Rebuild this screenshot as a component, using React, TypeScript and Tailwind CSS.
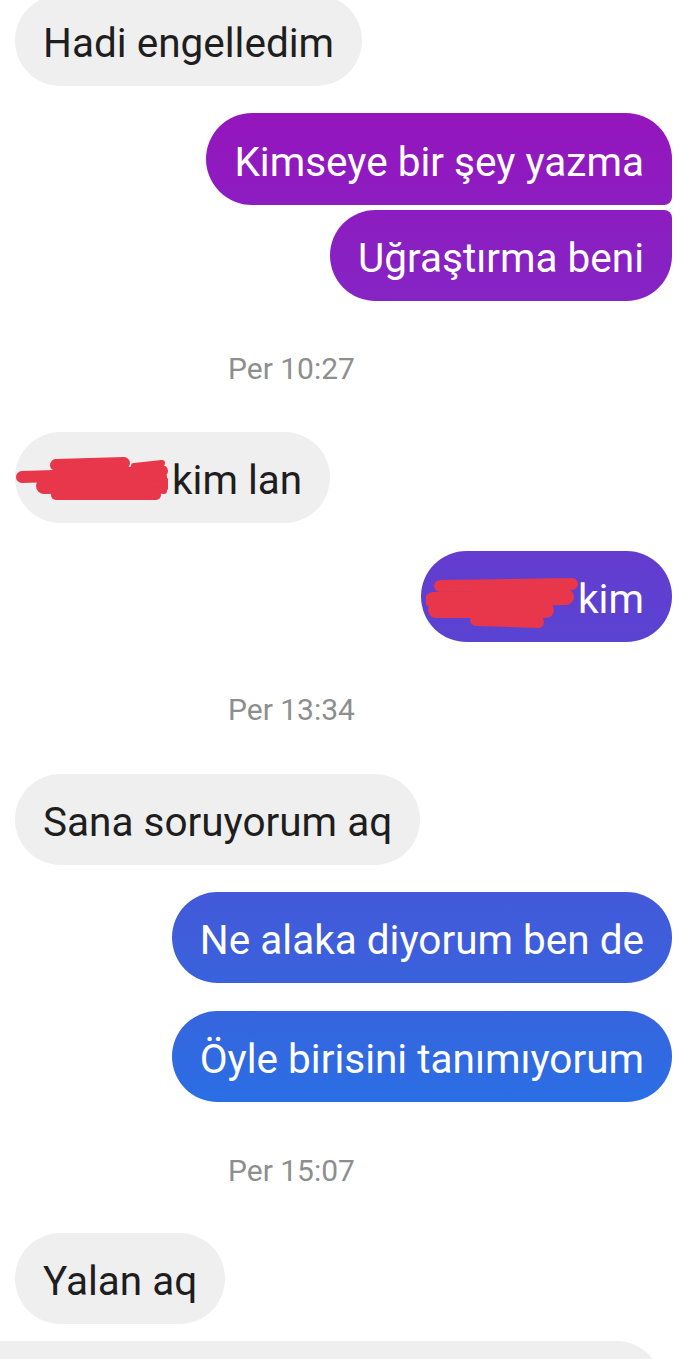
import React from "react";

const grad =
  "bg-[linear-gradient(180deg,#9c12bb_0px,#9416bd_120px,#8524c4_300px,#5e40d1_600px,#3f5dda_935px,#2b6ee4_1100px,#2673e6_1359px)] bg-fixed";

function RedactGray() {
  return (
    <svg
      className="absolute left-[-27px] top-[-13px]"
      width="152"
      height="46"
      viewBox="0 0 152 46"
    >
      <g stroke="#e8364a" strokeLinecap="round" fill="none">
        <path d="M40 8 L108 6" strokeWidth="12" />
        <path d="M6 20 L70 18 L146 14" strokeWidth="12" />
        <path d="M28 29 L146 27" strokeWidth="16" />
        <path d="M40 38 L140 38" strokeWidth="10" />
        <path d="M118 9 L146 6" strokeWidth="6" />
        <path d="M136 21 L148 20" strokeWidth="6" />
        <path d="M134 33 L148 34" strokeWidth="6" />
      </g>
    </svg>
  );
}

function RedactBlue() {
  return (
    <svg
      className="absolute left-[-23px] top-[-12px]"
      width="152"
      height="54"
      viewBox="0 0 152 54"
    >
      <g stroke="#e8364a" strokeLinecap="round" fill="none">
        <path d="M14 9 L146 7" strokeWidth="12" />
        <path d="M7 23 L140 20" strokeWidth="16" />
        <path d="M10 33 L120 33" strokeWidth="16" />
        <path d="M50 43 L112 45" strokeWidth="12" />
      </g>
    </svg>
  );
}

const bubbleBase =
  "h-[91px] flex items-center px-[28px] pt-[5px] text-[40.5px] leading-[48px] whitespace-nowrap";

function Left({ children, className = "" }: { children: React.ReactNode; className?: string }) {
  return (
    <div className="flex pl-[15px]">
      <div className={`${bubbleBase} rounded-[46px] bg-[#efefef] text-[#1e1e1e] ${className}`}>
        {children}
      </div>
    </div>
  );
}

function Right({ children, className = "" }: { children: React.ReactNode; className?: string }) {
  return (
    <div className="flex justify-end pr-[18px]">
      <div className={`${bubbleBase} ${grad} text-white ${className}`}>{children}</div>
    </div>
  );
}

function Stamp({ children, className = "" }: { children: React.ReactNode; className?: string }) {
  return (
    <div className={`pl-[228px] pt-[3px] text-[30px] leading-[36px] text-[#8e8e8e] ${className}`}>
      {children}
    </div>
  );
}

export default function App() {
  return (
    <div
      className="h-[1359px] w-[690px] overflow-hidden bg-white flex flex-col"
      style={{ fontFamily: "Roboto, 'Noto Sans', sans-serif" }}
    >
      <div className="mt-[-5px]">
        <Left>Hadi engelledim</Left>
      </div>
      <div className="mt-[27px]">
        <Right className="h-[92px] rounded-[46px] rounded-br-[8px]">Kimseye bir şey yazma</Right>
      </div>
      <div className="mt-[5px]">
        <Right className="rounded-[46px] rounded-tr-[8px]">Uğraştırma beni</Right>
      </div>
      <Stamp className="mt-[47px] mb-[45px]">Per 10:27</Stamp>
      <Left className="h-[90px]">
        <span className="relative inline-block w-[129px] h-[20px]">
          <RedactGray />
        </span>
        <span>kim lan</span>
      </Left>
      <div className="mt-[28px]">
        <Right className="rounded-[46px]">
          <span className="relative inline-block w-[129px] h-[20px]">
            <RedactBlue />
          </span>
          <span>kim</span>
        </Right>
      </div>
      <Stamp className="mt-[47px] mb-[46px]">Per 13:34</Stamp>
      <Left className="h-[90px]">Sana soruyorum aq</Left>
      <div className="mt-[27px]">
        <Right className="rounded-[46px]">Ne alaka diyorum ben de</Right>
      </div>
      <div className="mt-[28px]">
        <Right className="rounded-[46px]">Öyle birisini tanımıyorum</Right>
      </div>
      <Stamp className="mt-[48px] mb-[44px]">Per 15:07</Stamp>
      <Left>Yalan aq</Left>
      <div className="mt-[17px] flex">
        <div className="h-[91px] w-[662px] shrink-0 rounded-r-[46px] bg-[#efefef]" />
      </div>
    </div>
  );
}
